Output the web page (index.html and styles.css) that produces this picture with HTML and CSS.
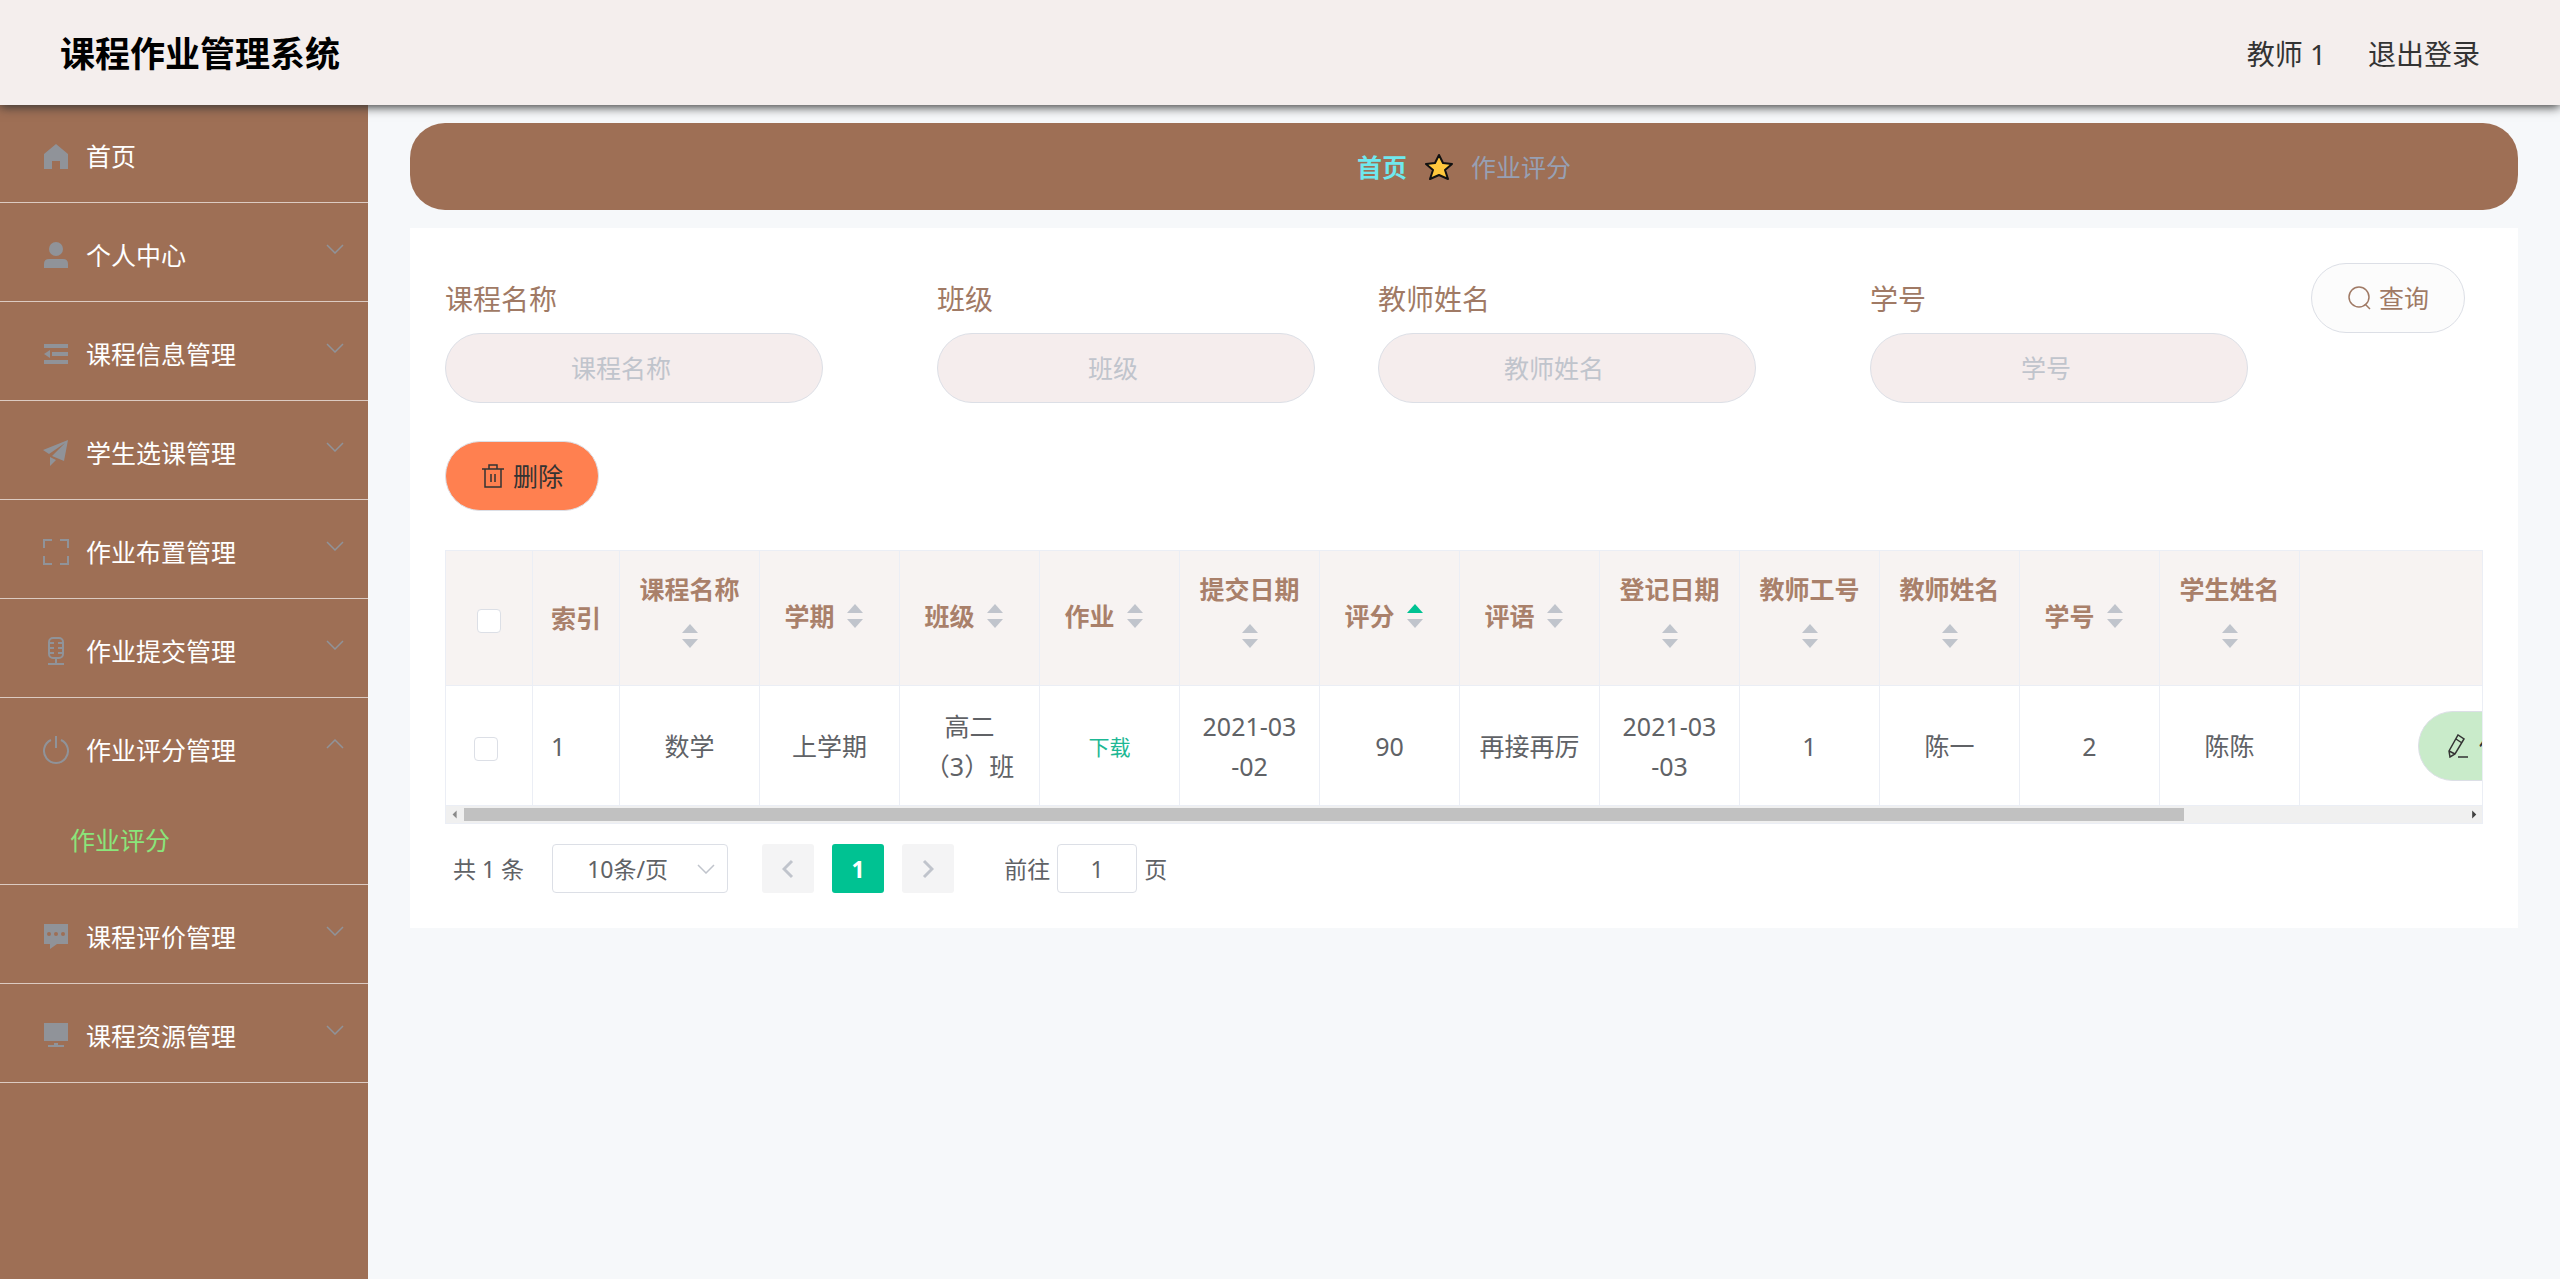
FILE: index.html
```html
<!DOCTYPE html>
<html lang="zh-CN">
<head>
<meta charset="utf-8">
<title>课程作业管理系统</title>
<link rel="stylesheet" href="styles.css">
</head>
<body>
<svg class="sprite" aria-hidden="true">
  <symbol id="down" viewBox="0 0 18 10"><path d="M1 1l8 8 8-8" fill="none" stroke="currentColor" stroke-width="1.5"/></symbol>
  <symbol id="caret" viewBox="0 0 18 24"><path class="caret-up" d="M1 9L9 0l8 9z"/><path class="caret-down" d="M1 15h16l-8 9z"/></symbol>
</svg>
<header class="topbar">
  <h1 class="brand">课程作业管理系统</h1>
  <div class="user"><span>教师 1</span><a href="#">退出登录</a></div>
</header>
<div class="layout">
  <nav class="sidebar">
    <ul class="menu">
      <li><a class="item home" href="#"><svg class="icon" viewBox="0 0 28 28" fill="currentColor"><path d="M14 2l12 10v15h-8v-8h-8v8H2V12z"/></svg><span>首页</span></a></li>
      <li><a class="item" href="#"><svg class="icon" viewBox="0 0 28 28" fill="currentColor"><circle cx="14" cy="8" r="7"/><path d="M2 27v-4q0-5 5-5h14q5 0 5 5v4z"/></svg><span>个人中心</span><svg class="arrow"><use href="#down"/></svg></a></li>
      <li><a class="item" href="#"><svg class="icon" viewBox="0 0 28 28" fill="currentColor"><path d="M2 4h24v4H2zM10 12h16v4H10zM2 20h24v4H2zM8 10v8l-6-4z"/></svg><span>课程信息管理</span><svg class="arrow"><use href="#down"/></svg></a></li>
      <li><a class="item" href="#"><svg class="icon" viewBox="0 0 28 28" fill="currentColor"><path d="M26 1L1 11l6 4L23 4 10 17l12 5zM8 18l6 3-6 6z"/></svg><span>学生选课管理</span><svg class="arrow"><use href="#down"/></svg></a></li>
      <li><a class="item" href="#"><svg class="icon" viewBox="0 0 28 28" fill="none" stroke="currentColor" stroke-width="2"><path d="M10 2H2v8M18 2h8v8M26 18v8h-8M10 26H2v-8"/></svg><span>作业布置管理</span><svg class="arrow"><use href="#down"/></svg></a></li>
      <li><a class="item" href="#"><svg class="icon" viewBox="0 0 28 28" fill="none" stroke="currentColor" stroke-width="2"><rect x="7" y="1" width="14" height="20" rx="4"/><path d="M7 6h5M7 11h5M7 16h5M21 6h-5M21 11h-5M21 16h-5M14 21v6M6 27h16"/></svg><span>作业提交管理</span><svg class="arrow"><use href="#down"/></svg></a></li>
      <li><a class="item" href="#"><svg class="icon" viewBox="0 0 28 28" fill="none" stroke="currentColor" stroke-width="2"><path d="M14 0v12M9 4a12 12 0 1 0 10 0"/></svg><span>作业评分管理</span><svg class="arrow open"><use href="#down"/></svg></a>
        <a class="subitem" href="#">作业评分</a></li>
      <li><a class="item" href="#"><svg class="icon" viewBox="0 0 28 28" fill="currentColor" fill-rule="evenodd"><path d="M2 1h24v20H15l-7 5v-5H2zM5 11a2 2 0 1 0 4 0a2 2 0 1 0-4 0M12 11a2 2 0 1 0 4 0a2 2 0 1 0-4 0M19 11a2 2 0 1 0 4 0a2 2 0 1 0-4 0"/></svg><span>课程评价管理</span><svg class="arrow"><use href="#down"/></svg></a></li>
      <li><a class="item" href="#"><svg class="icon" viewBox="0 0 28 28" fill="currentColor"><path d="M2 1h24v18H2zM12 21h4v2h6v2H6v-2h6z"/></svg><span>课程资源管理</span><svg class="arrow"><use href="#down"/></svg></a></li>
    </ul>
  </nav>
  <main class="main">
    <div class="crumbs">
      <a href="#">首页</a>
      <svg class="star" viewBox="0 0 28 28"><path d="M14 2l4 8 9 1-7 6 3 9-9-4-9 4 3-9-7-6 9-1z" fill="#ffc83d" stroke="#111" stroke-width="2" stroke-linejoin="round"/></svg>
      <span>作业评分</span>
    </div>
    <section class="card">
      <form class="filters">
        <div class="field long"><label for="f1">课程名称</label><input id="f1" type="text" placeholder="课程名称"></div>
        <div class="field"><label for="f2">班级</label><input id="f2" type="text" placeholder="班级"></div>
        <div class="field long"><label for="f3">教师姓名</label><input id="f3" type="text" placeholder="教师姓名"></div>
        <div class="field"><label for="f4">学号</label><input id="f4" type="text" placeholder="学号"></div>
        <button class="pill query" type="button"><svg class="glyph" viewBox="0 0 24 24" fill="none" stroke="currentColor" stroke-width="1.5"><circle cx="12" cy="11" r="10"/><path d="M18 18l5 5"/></svg>查询</button>
      </form>
      <button class="pill delete" type="button"><svg class="glyph" viewBox="0 0 24 24" fill="none" stroke="currentColor" stroke-width="1.5"><path d="M1 5h22M4 5v18h16V5M8 5V1h8v4M10 10v8M14 10v8"/></svg>删除</button>
      <div class="grid">
        <div class="viewport">
          <table class="table">
            <colgroup><col class="c-small"><col class="c-small"><col span="12" class="c-data"><col class="c-act"></colgroup>
            <thead><tr>
              <th class="pick"><input type="checkbox" aria-label="全选"></th>
              <th class="left">索引</th>
              <th><span class="head">课程名称<svg class="caret"><use href="#caret"/></svg></span></th>
              <th><span class="head">学期<svg class="caret"><use href="#caret"/></svg></span></th>
              <th><span class="head">班级<svg class="caret"><use href="#caret"/></svg></span></th>
              <th><span class="head">作业<svg class="caret"><use href="#caret"/></svg></span></th>
              <th><span class="head">提交日期<svg class="caret"><use href="#caret"/></svg></span></th>
              <th><span class="head">评分<svg class="caret asc"><use href="#caret"/></svg></span></th>
              <th><span class="head">评语<svg class="caret"><use href="#caret"/></svg></span></th>
              <th><span class="head">登记日期<svg class="caret"><use href="#caret"/></svg></span></th>
              <th><span class="head">教师工号<svg class="caret"><use href="#caret"/></svg></span></th>
              <th><span class="head">教师姓名<svg class="caret"><use href="#caret"/></svg></span></th>
              <th><span class="head">学号<svg class="caret"><use href="#caret"/></svg></span></th>
              <th><span class="head">学生姓名<svg class="caret"><use href="#caret"/></svg></span></th>
              <th></th>
            </tr></thead>
            <tbody><tr>
              <td class="left"><input type="checkbox" aria-label="选择第 1 行"></td>
              <td class="left">1</td><td>数学</td><td>上学期</td><td>高二<br>（3）班</td>
              <td><a class="download" href="#">下载</a></td>
              <td>2021-03<br>-02</td><td>90</td><td>再接再厉</td><td>2021-03<br>-03</td>
              <td>1</td><td>陈一</td><td>2</td><td>陈陈</td>
              <td class="actions"><button class="pill edit" type="button"><svg class="glyph" viewBox="0 0 24 24" fill="none" stroke="currentColor" stroke-width="1.5"><path d="M2 17L11 1l6 4L8 20l-5 3zM9 5l6 4M2 17l6 3M11 23h10"/></svg>修改</button></td>
            </tr></tbody>
          </table>
        </div>
        <div class="scroll" aria-hidden="true">
          <svg class="tip" viewBox="0 0 18 16"><path d="M11 3v10L6 8z" fill="#8a8a8a"/></svg>
          <div class="track"><div class="thumb"></div></div>
          <svg class="tip" viewBox="0 0 18 16"><path d="M8 3v10l5-5z" fill="#404040"/></svg>
        </div>
      </div>
      <div class="pager">
        <span class="total">共 1 条</span>
        <div class="size"><select aria-label="每页条数"><option>10条/页</option></select><svg class="arrow"><use href="#down"/></svg></div>
        <button class="page" type="button" aria-label="上一页"><svg class="step" viewBox="0 0 12 20"><path d="M10 2l-8 8 8 8"/></svg></button>
        <button class="page current" type="button">1</button>
        <button class="page" type="button" aria-label="下一页"><svg class="step" viewBox="0 0 12 20"><path d="M2 2l8 8-8 8"/></svg></button>
        <label class="jump">前往<input type="text" value="1">页</label>
      </div>
    </section>
  </main>
</div>
</body>
</html>
```
FILE: styles.css
```css
* { box-sizing: border-box; }
body {
  margin: 0;
  min-height: 100vh;
  display: flex;
  flex-direction: column;
  background: #f6f8fa;
  color: #606266;
  font: 25px/40px "Noto Sans", "Noto Sans CJK SC", sans-serif;
}
a { color: inherit; text-decoration: none; }
button, input, select { font: inherit; color: inherit; }
.sprite { display: none; }

.topbar {
  position: relative;
  z-index: 1;
  display: flex;
  align-items: center;
  justify-content: space-between;
  height: 105px;
  padding: 3px 80px 0 60px;
  background: #f4eeed;
  box-shadow: 0 2px 10px #333;
}
.brand { margin: 0; font-size: 35px; color: #000; }
.user { display: flex; gap: 42px; font-size: 28px; color: #333; }

.layout { flex: 1; display: flex; }
.sidebar { flex: none; width: 368px; background: #9e6f55; }
.menu { margin: 0; padding: 0; list-style: none; }
.menu li { border-bottom: 1px solid #dccbc2; }
.item {
  display: flex;
  align-items: center;
  height: 98px;
  padding: 6px 24px 0 42px;
  color: #fff;
}
.home { height: 97px; padding-top: 4px; }
.item span { flex: 1; }
.icon { width: 28px; height: 28px; margin-right: 16px; color: #909399; }
.arrow { width: 18px; height: 10px; color: #909399; }
.item .arrow { margin-bottom: 12px; }
.open { transform: rotate(180deg); }
.subitem { display: flex; align-items: center; height: 88px; padding-left: 70px; color: #8ae57a; }

.main { flex: 1; min-width: 0; padding: 18px 42px; }
.crumbs {
  display: flex;
  align-items: center;
  justify-content: center;
  gap: 18px;
  height: 87px;
  border-radius: 35px;
  background: #9e6f55;
  color: #97a0b4;
}
.crumbs a { font-weight: 700; color: #6fe8ee; }
.star { width: 28px; height: 28px; }

.card { margin-top: 18px; padding: 35px; background: #fff; }
.filters { display: flex; flex-wrap: wrap; align-items: flex-start; row-gap: 18px; }
.field { display: flex; flex-direction: column; width: 378px; margin-right: 63px; padding-top: 16px; }
.long { margin-right: 114px; }
.field label { margin-bottom: 14px; font-size: 28px; color: #a07a65; }
.field input {
  width: 100%;
  height: 70px;
  padding: 0 52px 0 26px;
  border: 1px solid #dcdfe6;
  border-radius: 35px;
  background: #f5eded;
  text-align: center;
}
.field input::placeholder { color: #c0c4cc; }
.pill {
  display: inline-flex;
  align-items: center;
  gap: 8px;
  height: 70px;
  padding: 0 35px;
  border: 1px solid #dcdfe6;
  border-radius: 35px;
  white-space: nowrap;
}
.glyph { width: 24px; height: 24px; }
.query { background: #fcfcfc; color: #a07a65; }
.delete { margin-top: 38px; background: #ff8050; color: #333; }
.edit { padding-left: 28px; background: #c9ebca; color: #333; }

.grid { margin-top: 39px; border: 1px solid #ebeef5; }
.viewport { overflow: hidden; }
.table { table-layout: fixed; width: 2380px; border-collapse: separate; border-spacing: 0; text-align: center; }
.c-small { width: 87px; }
.c-data { width: 140px; }
.c-act { width: 526px; }
.table th, .table td { padding: 0; border-right: 1px solid #ebeef5; border-bottom: 1px solid #ebeef5; }
.table th { height: 135px; background: #f7f3f2; color: #a9806a; }
.table td { height: 120px; }
.table .left { padding-left: 18px; text-align: left; }
.head { display: flex; flex-wrap: wrap; align-items: center; justify-content: center; padding-bottom: 4px; }
.caret { width: 18px; height: 24px; margin: 15px 11px; fill: #c0c4cc; }
.asc { --up: #00c292; }
.caret-up { fill: var(--up, #c0c4cc); }
.table input {
  appearance: none;
  display: inline-block;
  width: 24px;
  height: 24px;
  margin: 0 10px;
  border: 1px solid #dcdfe6;
  border-radius: 4px;
  background: #fff;
  vertical-align: middle;
}
.download { font-size: 21px; color: #1db894; }
.table .actions { padding-left: 118px; text-align: left; }

.scroll { display: flex; height: 17px; padding: 2px 0; background: #f0f0f0; }
.tip { width: 18px; height: 13px; }
.track { flex: 1; }
.thumb { width: 86%; height: 13px; background: #c1c1c1; }

.pager { display: flex; align-items: center; margin-top: 20px; padding-left: 8px; font-size: 23px; }
.total { margin-right: 28px; }
.size { display: flex; align-items: center; width: 176px; height: 49px; margin-right: 34px; padding-right: 12px; border: 1px solid #dcdfe6; border-radius: 4px; }
.size select { appearance: none; flex: 1; height: 47px; padding: 0 0 0 34px; border: 0; background: none; }
.size .arrow { color: #c0c4cc; }
.page {
  display: flex;
  align-items: center;
  justify-content: center;
  width: 52px;
  height: 49px;
  margin-right: 18px;
  padding: 0;
  border: 0;
  border-radius: 3px;
  background: #f4f4f5;
  font-weight: 700;
}
.current { background: #00c292; color: #fff; }
.step { width: 12px; height: 20px; fill: none; stroke: #c0c4cc; stroke-width: 3px; }
.jump { display: flex; align-items: center; gap: 7px; margin-left: 32px; }
.jump input { width: 80px; height: 49px; padding: 0; border: 1px solid #dcdfe6; border-radius: 4px; text-align: center; }
```
